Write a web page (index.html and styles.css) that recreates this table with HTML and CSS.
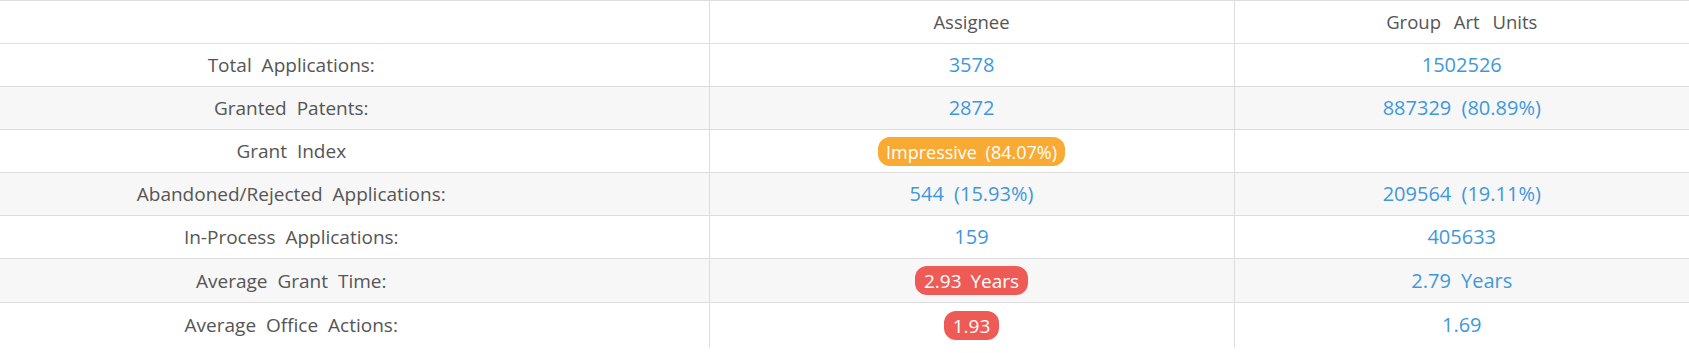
FILE: index.html
```html
<!DOCTYPE html>
<html lang="en">
<head>
<meta charset="utf-8">
<title>Comparison</title>
<link rel="stylesheet" href="styles.css">
</head>
<body>
<div class="panel">
  <table class="stats">
    <colgroup>
      <col class="c-label">
      <col class="c-assignee">
      <col class="c-gau">
    </colgroup>
    <thead>
      <tr>
        <th class="label"></th>
        <th class="head">Assignee</th>
        <th class="head">Group Art Units</th>
      </tr>
    </thead>
    <tbody>
      <tr>
        <td class="label">Total Applications:</td>
        <td><a class="val">3578</a></td>
        <td><a class="val">1502526</a></td>
      </tr>
      <tr>
        <td class="label">Granted Patents:</td>
        <td><a class="val">2872</a></td>
        <td><a class="val">887329 (80.89%)</a></td>
      </tr>
      <tr>
        <td class="label">Grant Index</td>
        <td><span class="badge orange">Impressive (84.07%)</span></td>
        <td></td>
      </tr>
      <tr>
        <td class="label">Abandoned/Rejected Applications:</td>
        <td><a class="val">544 (15.93%)</a></td>
        <td><a class="val">209564 (19.11%)</a></td>
      </tr>
      <tr>
        <td class="label">In-Process Applications:</td>
        <td><a class="val">159</a></td>
        <td><a class="val">405633</a></td>
      </tr>
      <tr class="tall">
        <td class="label">Average Grant Time:</td>
        <td><span class="badge red">2.93 Years</span></td>
        <td><a class="val">2.79 Years</a></td>
      </tr>
      <tr class="last">
        <td class="label">Average Office Actions:</td>
        <td><span class="badge red">1.93</span></td>
        <td><a class="val">1.69</a></td>
      </tr>
    </tbody>
  </table>
</div>
</body>
</html>
```

FILE: styles.css
```css
html, body {
  margin: 0;
  padding: 0;
  background: #ffffff;
}

body {
  font-family: "Open Sans", "Noto Sans", sans-serif;
  font-size: 19px;
  color: #555555;
}

.panel {
  box-shadow: 0 3px 5px rgba(0, 0, 0, 0.16);
}

.stats {
  width: 100%;
  border-collapse: collapse;
  table-layout: fixed;
  word-spacing: 5px;
}

.c-label { width: 709px; }
.c-assignee { width: 525px; }

.stats th,
.stats td {
  height: 43px;
  padding: 0 8px;
  text-align: center;
  vertical-align: middle;
  border-top: 1px solid #dddddd;
  border-left: 1px solid #dddddd;
  font-weight: 400;
  line-height: 24px;
  box-sizing: border-box;
}

.stats tr.tall td {
  height: 44px;
}

.stats tr.last td {
  height: 45px;
}

.stats th:first-child,
.stats td:first-child {
  border-left: none;
}

.stats tbody tr:nth-child(even) {
  background: #f7f7f7;
}

.stats .head {
  font-size: 18.5px;
  word-spacing: 8px;
}

.stats .label {
  color: #555555;
  padding-right: 134px;
}

.val {
  color: #3f98dd;
  text-decoration: none;
  font-size: 20px;
  word-spacing: 5px;
}

.badge {
  display: inline-block;
  color: #ffffff;
  padding: 3px 9px 2px;
  border-radius: 12px;
  line-height: 24px;
  font-size: 19px;
  word-spacing: 4px;
}

.orange {
  background: #f9aa33;
  font-size: 18px;
  padding: 3px 8px 2px;
}

.red { background: #ee5b57; }
```
